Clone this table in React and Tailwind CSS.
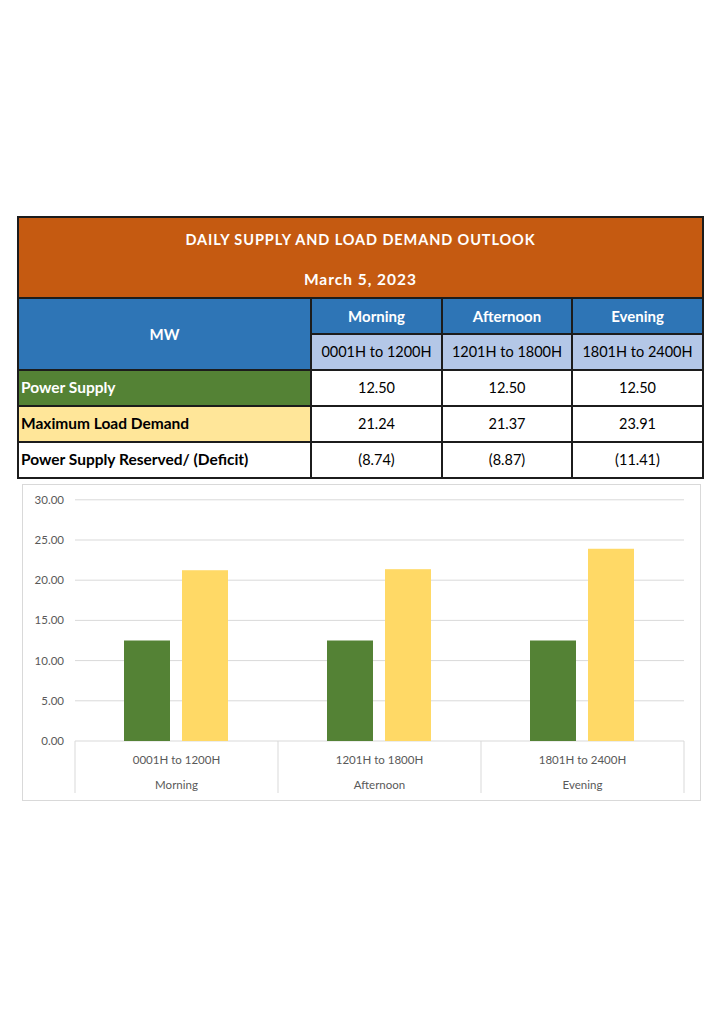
import React from "react";

const cols = [
  { name: "Morning", range: "0001H to 1200H", supply: 12.5, demand: 21.24, res: "(8.74)" },
  { name: "Afternoon", range: "1201H to 1800H", supply: 12.5, demand: 21.37, res: "(8.87)" },
  { name: "Evening", range: "1801H to 2400H", supply: 12.5, demand: 23.91, res: "(11.41)" },
];

const cell = "border-r-2 border-b-2 border-[#1c1c1c] h-[36px] flex items-center";

function Chart() {
  const y0 = 257;
  const k = 8.04;
  const ticks = [0, 5, 10, 15, 20, 25, 30];
  return (
    <div className="ml-[22px] mt-[5px] w-[679px] h-[317px] border border-[#d9d9d9]">
      <svg width="677" height="315" viewBox="1 1 677 315" style={{ fontFamily: "Lato, 'Open Sans', sans-serif" }}>
        {ticks.map((t) => (
          <g key={t}>
            <line x1="53" x2="662" y1={y0 - t * k} y2={y0 - t * k} stroke="#d9d9d9" strokeWidth="1" />
            <text x="42" y={y0 - t * k + 4} textAnchor="end" fontSize="11.5" fill="#595959">
              {t.toFixed(2)}
            </text>
          </g>
        ))}
        {cols.map((c, i) => {
          const s = 53 + 203 * i;
          return (
            <g key={c.name}>
              <rect x={s + 49} y={y0 - c.supply * k} width="46" height={c.supply * k} fill="#548235" />
              <rect x={s + 107} y={y0 - c.demand * k} width="46" height={c.demand * k} fill="#ffd966" />
              <text x={s + 101.5} y="280" textAnchor="middle" fontSize="11.5" fill="#595959">
                {c.range}
              </text>
              <text x={s + 101.5} y="305" textAnchor="middle" fontSize="11.5" fill="#595959">
                {c.name}
              </text>
            </g>
          );
        })}
        {[0, 1, 2, 3].map((i) => (
          <line key={i} x1={53 + 203 * i} x2={53 + 203 * i} y1={y0} y2="309" stroke="#d9d9d9" strokeWidth="1" />
        ))}
      </svg>
    </div>
  );
}

export default function App() {
  return (
    <div className="w-[724px] h-[1024px] bg-white pt-[216px]" style={{ fontFamily: "Lato, 'Open Sans', sans-serif" }}>
      <div className="ml-[17px] w-[687px] border-t-2 border-l-2 border-[#1c1c1c] grid grid-cols-[293px_131px_130px_131px] text-[14.5px] text-black">
        <div className="col-span-4 h-[81px] bg-[#c55a11] border-r-2 border-b-2 border-[#1c1c1c] flex flex-col items-center text-white font-bold">
          <div className="mt-[11px] h-[22px] leading-[22px] text-[14.5px] tracking-[0.9px]">DAILY SUPPLY AND LOAD DEMAND OUTLOOK</div>
          <div className="mt-[17px] h-[22px] leading-[22px] text-[15.5px] tracking-[1px]">March 5, 2023</div>
        </div>
        <div className="row-span-2 bg-[#2e75b6] border-r-2 border-b-2 border-[#1c1c1c] flex items-center justify-center text-white font-bold text-[15px]">
          MW
        </div>
        {cols.map((c) => (
          <div key={c.name} className={`${cell} justify-center bg-[#2e75b6] text-white font-bold text-[15px]`}>
            {c.name}
          </div>
        ))}
        {cols.map((c) => (
          <div key={c.range} className={`${cell} justify-center bg-[#b4c7e7]`}>
            {c.range}
          </div>
        ))}
        <div className={`${cell} bg-[#548235] text-white font-bold pl-[2px] text-[15.5px]`}>Power Supply</div>
        {cols.map((c) => (
          <div key={c.name + "s"} className={`${cell} justify-center`}>
            {c.supply.toFixed(2)}
          </div>
        ))}
        <div className={`${cell} bg-[#ffe699] font-bold pl-[2px] text-[15.5px]`}>Maximum Load Demand</div>
        {cols.map((c) => (
          <div key={c.name + "d"} className={`${cell} justify-center`}>
            {c.demand.toFixed(2)}
          </div>
        ))}
        <div className={`${cell} font-bold pl-[2px] text-[15.5px]`}>Power Supply Reserved/ (Deficit)</div>
        {cols.map((c) => (
          <div key={c.name + "r"} className={`${cell} justify-center`}>
            {c.res}
          </div>
        ))}
      </div>
      <Chart />
    </div>
  );
}
